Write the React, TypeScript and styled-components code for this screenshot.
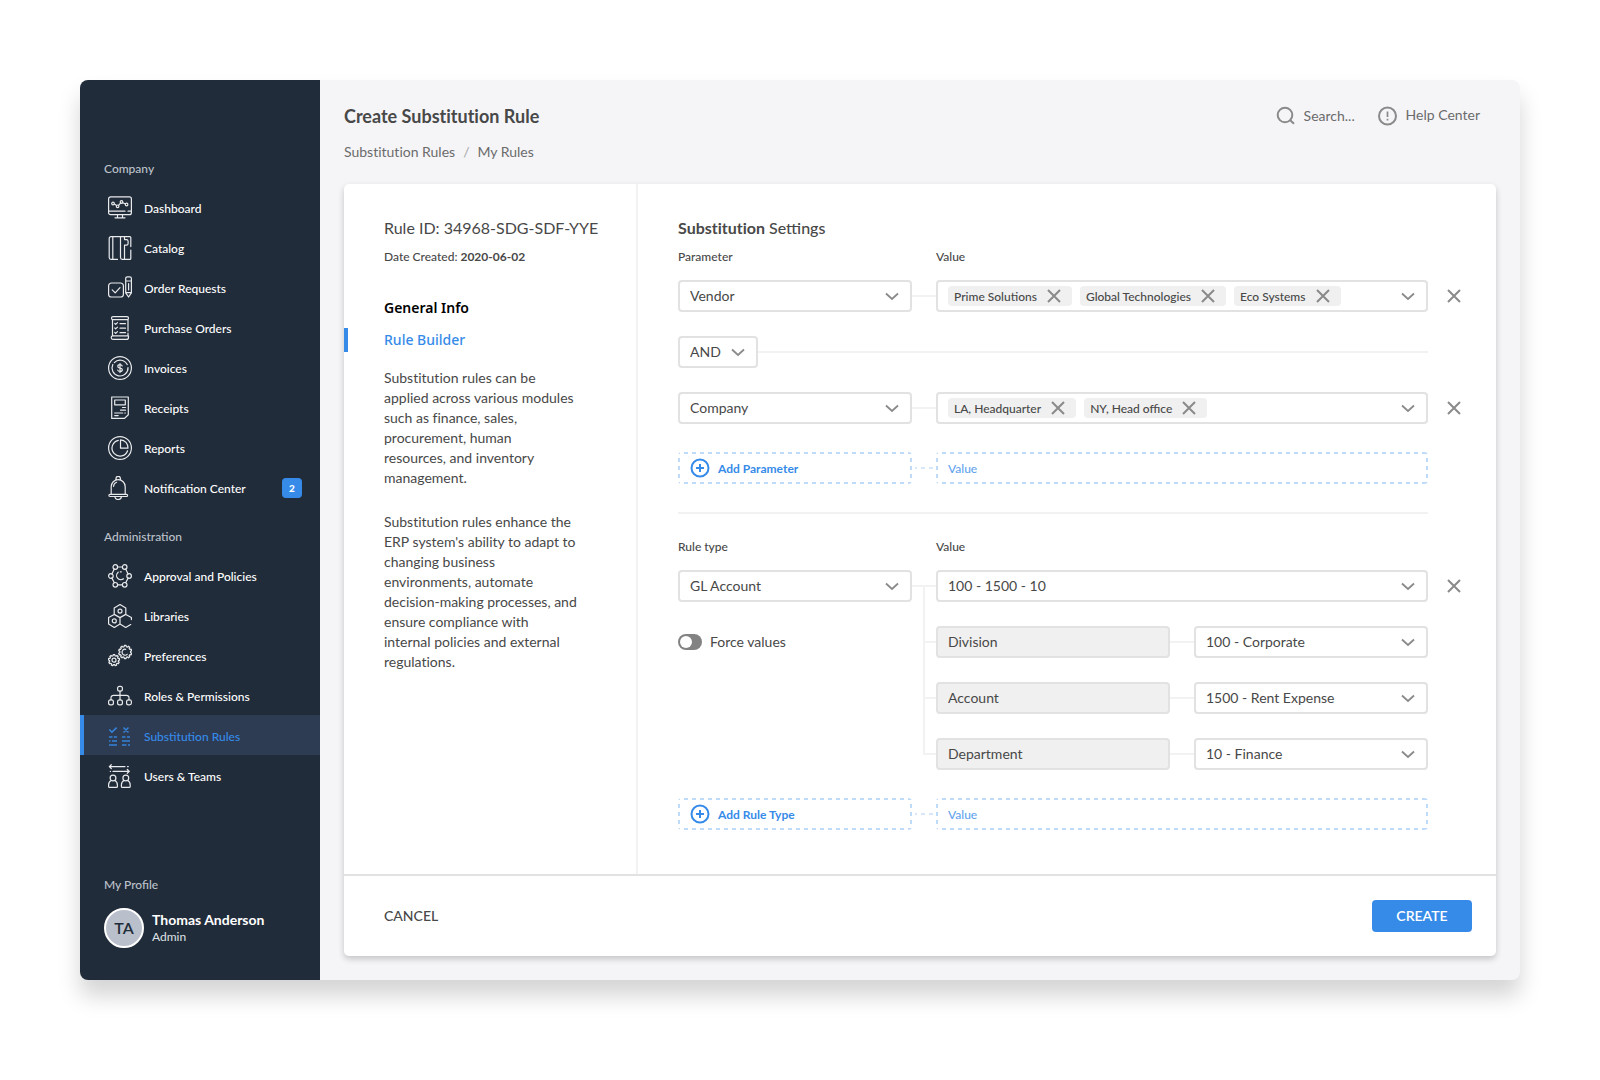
import React from 'react';
import styled, { createGlobalStyle, css } from 'styled-components';

const color = {
  navy: '#212c3a',
  navyActive: '#2d3b53',
  blue: '#368be9',
  blueSoft: '#bfdbfa',
  blueFaint: '#d7e8fc',
  text: '#484848',
  muted: '#6b6b6b',
  icon: '#8a8a8a',
  border: '#e2e2e2',
  line: '#f2f2f2',
  fill: '#f0f0f0',
  canvas: '#f5f5f8',
};

const GlobalStyle = createGlobalStyle`
  *, *::before, *::after { box-sizing: border-box; }
  body { margin: 0; background: #fff; }
  body, button, input, select {
    font-family: Lato, "Liberation Sans", sans-serif;
    color: ${color.text};
  }
  button, input, select { margin: 0; }
  h1, h2, p, ul, ol { margin: 0; padding: 0; }
  ul, ol { list-style: none; }
  a { color: inherit; text-decoration: none; }
  svg { display: block; flex: none; }
`;

/* ---------- Shell ---------- */

const Page = styled.div`
  display: flex;
  min-height: 100vh;
  padding: 80px 80px 100px;
`;

const Window = styled.div`
  flex: 1;
  display: flex;
  border-radius: 8px;
  background: ${color.canvas};
  box-shadow: 0 16px 22px rgba(0, 0, 0, 0.17);
`;

const Sidebar = styled.aside`
  flex: none;
  display: flex;
  flex-direction: column;
  width: 240px;
  padding: 81px 0 32px;
  border-radius: 8px 0 0 8px;
  background: ${color.navy};
`;

const SideHeading = styled.h2`
  padding: 0 24px;
  font-size: 12px;
  font-weight: 500;
  line-height: 16px;
  color: #bcc2ca;
`;

const NavGroup = styled.nav`
  margin-bottom: 22px;
`;

const NavList = styled.ul`
  margin-top: 10px;
`;

const NavLink = styled.a<{ $active?: boolean }>`
  display: flex;
  align-items: center;
  gap: 12px;
  height: 40px;
  padding: 2px 18px 0 28px;
  font-size: 12px;
  font-weight: 500;
  color: #fff;
  ${(p) =>
    p.$active &&
    css`
      color: ${color.blue};
      background: ${color.navyActive};
      box-shadow: inset 4px 0 0 ${color.blue};
    `}
`;

const NavIcon = styled.svg`
  width: 24px;
  height: 24px;
  fill: none;
  stroke: currentColor;
  stroke-width: 1.2;
  stroke-linecap: round;
  stroke-linejoin: round;
  opacity: 0.9;
`;

const Badge = styled.span`
  display: grid;
  place-items: center;
  width: 20px;
  height: 20px;
  margin-left: auto;
  border-radius: 4px;
  font-size: 10px;
  font-weight: 900;
  color: #fff;
  background: ${color.blue};
`;

const Profile = styled.section`
  display: grid;
  gap: 15px;
  margin-top: auto;
`;

const ProfileRow = styled.div`
  display: flex;
  align-items: center;
  gap: 8px;
  padding: 0 24px;
`;

const Avatar = styled.span`
  width: 40px;
  height: 40px;
  border: 2px solid #fff;
  border-radius: 50%;
  font-size: 16px;
  font-weight: 600;
  line-height: 35px;
  text-align: center;
  color: ${color.navy};
  background: #b9c0cb;
`;

const ProfileName = styled.p`
  font-size: 14px;
  font-weight: 700;
  line-height: 18px;
  color: #fff;
`;

const ProfileRole = styled.p`
  font-size: 12px;
  line-height: 16px;
  color: #dfe2e6;
`;

/* ---------- Main area ---------- */

const Main = styled.main`
  flex: 1;
  min-width: 0;
  display: flex;
  flex-direction: column;
  gap: 20px;
  padding: 24px;
`;

const Header = styled.header`
  display: flex;
  justify-content: space-between;
  align-items: flex-start;
  padding-right: 16px;
`;

const Title = styled.h1`
  font-size: 18px;
  font-weight: 700;
  line-height: 24px;
  font-variant-ligatures: none;
`;

const Crumbs = styled.ol`
  display: flex;
  gap: 8px;
  margin-top: 12px;
  font-size: 14px;
  line-height: 24px;
  font-variant-ligatures: none;
  color: ${color.muted};

  li + li::before {
    content: '/';
    margin-right: 8px;
    color: #a6a6a6;
  }
`;

const Tools = styled.div`
  display: flex;
  gap: 20px;
  height: 24px;
`;

const toolItem = css`
  display: flex;
  align-items: center;
  gap: 6px;
  font-size: 14px;
  line-height: 22px;
  color: ${color.muted};
`;

const SearchBox = styled.label`
  ${toolItem}
`;

const SearchInput = styled.input`
  width: 52px;
  padding: 0 0 2px;
  border: 0;
  outline: 0;
  font-size: 14px;
  background: transparent;
  &::placeholder {
    color: ${color.muted};
  }
`;

const HelpLink = styled.a`
  ${toolItem}

  span {
    padding-bottom: 2px;
  }
`;

const LineIcon = styled.svg<{ $accent?: boolean }>`
  width: 24px;
  height: 24px;
  fill: none;
  stroke: ${(p) => (p.$accent ? color.blue : color.icon)};
  stroke-width: 2;
  pointer-events: none;
`;

const Card = styled.form`
  flex: 1;
  display: flex;
  flex-direction: column;
  border-radius: 5px;
  background: #fff;
  box-shadow: 0 3px 6px rgba(0, 0, 0, 0.2);
`;

const CardBody = styled.div`
  flex: 1;
  display: flex;
`;

const Summary = styled.section`
  flex: none;
  width: 294px;
  padding: 32px 0 32px 40px;
  border-right: 2px solid ${color.line};
`;

const SectionTitle = styled.h2<{ $regular?: boolean }>`
  font-size: 16px;
  font-weight: ${(p) => (p.$regular ? 400 : 500)};
  line-height: 24px;

  b {
    font-weight: 700;
    font-variant-ligatures: none;
  }
`;

const Created = styled.p`
  margin-top: 9px;
  font-size: 12px;
  font-weight: 500;
  line-height: 16px;
`;

const Steps = styled.ul`
  display: grid;
  gap: 8px;
  margin: 31px 0 16px -40px;
`;

const StepLink = styled.a<{ $active?: boolean }>`
  display: block;
  padding-left: 40px;
  font-family: 'Noto Sans', 'Open Sans', sans-serif;
  font-size: 14px;
  font-weight: ${(p) => (p.$active ? 500 : 600)};
  line-height: 24px;
  color: ${(p) => (p.$active ? color.blue : '#000')};
  box-shadow: ${(p) => (p.$active ? `inset 4px 0 0 ${color.blue}` : 'none')};
`;

const Copy = styled.div`
  display: grid;
  gap: 24px;
  width: 193px;
  font-size: 14px;
  line-height: 20px;
  font-variant-ligatures: none;
`;

const Settings = styled.section`
  flex: 1;
  min-width: 0;
  padding: 32px 16px 32px 40px;
`;

/* Three equal columns joined by connectors, and a last track for the remove button. */
const Grid = styled.div`
  display: grid;
  grid-template-columns: minmax(0, 1fr) 24px minmax(0, 1fr) 24px minmax(0, 1fr) 52px;
  grid-auto-rows: 32px;
  row-gap: 24px;
  align-items: center;
`;

const LabelRow = styled(Grid)<{ $top: number }>`
  grid-auto-rows: 16px;
  margin: ${(p) => p.$top}px 0 15px;
  font-size: 12px;
  font-weight: 500;
  line-height: 16px;
`;

const ParamLabel = styled.span`
  grid-column: 1;
`;

const ValueLabel = styled.span`
  grid-column: 3 / 6;
`;

const Cell = styled.div<{ $col: string; $row?: string }>`
  grid-column: ${(p) => p.$col};
  grid-row: ${(p) => p.$row ?? 'auto'};
  min-width: 0;
`;

const JoinRow = styled(Cell)`
  display: flex;
  align-items: center;
`;

const JoinLine = styled.span`
  flex: 1;
  height: 2px;
  background: ${color.line};
`;

const Connector = styled.span<{ $col: number; $row?: number; $half?: boolean }>`
  grid-column: ${(p) => p.$col};
  grid-row: ${(p) => p.$row ?? 'auto'};
  justify-self: end;
  width: ${(p) => (p.$half ? '12px' : '100%')};
  height: 2px;
  background: ${color.line};
`;

const Trunk = styled.span`
  grid-column: 2;
  grid-row: 1 / 5;
  place-self: stretch center;
  width: 2px;
  margin: 16px 0 15px;
  background: ${color.line};
`;

/* Short, evenly spaced dashes, drawn as one strip for each edge. */
const dashX = `repeating-linear-gradient(90deg, ${color.blueSoft} 0 2px, transparent 2px 6px, ${color.blueSoft} 6px 8px)`;
const dashY = `repeating-linear-gradient(180deg, ${color.blueSoft} 0 2px, transparent 2px 6px, ${color.blueSoft} 6px 8px)`;

const dashedBox = css`
  height: 32px;
  border: 2px solid transparent;
  border-radius: 4px;
  background:
    ${dashX} top / 100% 2px no-repeat,
    ${dashX} bottom / 100% 2px no-repeat,
    ${dashY} left / 2px 100% no-repeat,
    ${dashY} right / 2px 100% no-repeat;
  background-origin: border-box;
  font-size: 12px;
`;

const DashedConnector = styled.span`
  height: 2px;
  margin: 0 3px;
  background: repeating-linear-gradient(
    90deg,
    ${color.blueFaint} 0 2px,
    transparent 2px 6px,
    ${color.blueFaint} 6px 8px
  );
`;

const SelectBox = styled.div<{ $compact?: boolean }>`
  display: grid;
  align-items: center;
  width: ${(p) => (p.$compact ? '80px' : 'auto')};

  > * {
    grid-area: 1 / 1;
  }
  > svg {
    justify-self: end;
    margin-right: 8px;
  }
`;

const NativeSelect = styled.select`
  appearance: none;
  width: 100%;
  height: 32px;
  padding: 0 32px 2px 10px;
  border: 2px solid ${color.border};
  border-radius: 4px;
  font-size: 14px;
  background: #fff;
`;

const ReadOnly = styled.input`
  display: block;
  width: 100%;
  height: 32px;
  padding: 0 10px 2px;
  border: 2px solid ${color.border};
  border-radius: 4px;
  font-size: 14px;
  background: ${color.fill};
`;

const TagField = styled.div`
  display: flex;
  align-items: center;
  gap: 8px;
  height: 32px;
  padding: 0 6px 0 10px;
  border: 2px solid ${color.border};
  border-radius: 4px;
  background: #fff;
`;

const Tag = styled.span`
  display: flex;
  align-items: center;
  gap: 5px;
  height: 20px;
  padding: 0 6px;
  border-radius: 4px;
  font-size: 12px;
  font-weight: 500;
  white-space: nowrap;
  background: ${color.fill};
`;

const IconButton = styled.button<{ $push?: boolean }>`
  display: grid;
  place-items: center;
  width: 24px;
  height: 24px;
  margin-left: ${(p) => (p.$push ? 'auto' : '0')};
  padding: 0;
  border: 0;
  background: transparent;
`;

const RemoveButton = styled(IconButton)`
  grid-column: 6;
  justify-self: center;
`;

const AddGrid = styled(Grid)`
  margin-top: 28px;
`;

const AddButton = styled.button`
  ${dashedBox}
  display: flex;
  align-items: center;
  gap: 6px;
  padding: 0 8px;
  font-weight: 700;
  color: ${color.blue};
`;

const AddInput = styled.input`
  ${dashedBox}
  grid-column: 3 / 6;
  min-width: 0;
  padding: 0 10px;
  font-weight: 500;
  &::placeholder {
    color: #63a4ee;
  }
`;

const Divider = styled.hr`
  height: 2px;
  margin: 28px 52px 0 0;
  border: 0;
  background: ${color.line};
`;

const SwitchLabel = styled.label`
  grid-column: 1;
  grid-row: 2;
  display: flex;
  align-items: center;
  gap: 8px;
  font-size: 14px;

  span {
    padding-bottom: 2px;
  }
`;

const Switch = styled.input`
  appearance: none;
  display: flex;
  align-items: center;
  width: 24px;
  height: 16px;
  margin: 0;
  padding: 0 2px;
  border-radius: 8px;
  background: #828282;

  &::before {
    content: '';
    width: 12px;
    height: 12px;
    border-radius: 50%;
    background: #fff;
  }
  &:checked {
    justify-content: flex-end;
    background: ${color.blue};
  }
`;

const CardFooter = styled.footer`
  display: flex;
  align-items: center;
  justify-content: space-between;
  height: 82px;
  padding: 0 24px 0 40px;
  border-top: 2px solid ${color.border};
`;

const FooterButton = styled.button<{ $primary?: boolean }>`
  width: ${(p) => (p.$primary ? '100px' : 'auto')};
  height: 32px;
  padding: 0 0 2px;
  border: 0;
  border-radius: 4px;
  font-size: 14px;
  font-weight: ${(p) => (p.$primary ? 600 : 500)};
  color: ${(p) => (p.$primary ? '#fff' : color.text)};
  background: ${(p) => (p.$primary ? color.blue : 'transparent')};
`;

/* ---------- Icons ---------- */

const Chevron = () => (
  <LineIcon viewBox="0 0 24 24" aria-hidden="true">
    <path d="M6 9.5l6 5.5 6-5.5" strokeWidth="1.8" />
  </LineIcon>
);

const Cross = () => (
  <LineIcon viewBox="0 0 24 24" aria-hidden="true">
    <path d="M6 6l12 12M18 6L6 18" />
  </LineIcon>
);

const PlusCircle = () => (
  <LineIcon viewBox="0 0 24 24" aria-hidden="true" $accent>
    <circle cx="12" cy="12" r="8.5" />
    <path d="M12 8v8M8 12h8" />
  </LineIcon>
);

function gear(cx: number, cy: number, inner: number, outer: number, teeth: number) {
  const points: string[] = [];
  for (let i = 0; i < teeth; i += 1) {
    [
      [-0.32, inner],
      [-0.2, outer],
      [0.2, outer],
      [0.32, inner],
    ].forEach(([shift, radius]) => {
      const angle = ((i + shift) * 2 * Math.PI) / teeth;
      points.push(
        `${(cx + radius * Math.sin(angle)).toFixed(2)} ${(cy - radius * Math.cos(angle)).toFixed(2)}`,
      );
    });
  }
  return `M${points.join('L')}Z`;
}

const icons = {
  dashboard: (
    <>
      <path d="M17 15.2H.6M20 15.2h3.4M2.6.9h18.8a2 2 0 0 1 2 2v13.8a2 2 0 0 1-2 2H2.6a2 2 0 0 1-2-2V2.9a2 2 0 0 1 2-2zM9.5 18.9v2.7M14.5 18.9v2.7M7 21.8h10" />
      <path d="M6.300 8.100l2.300 1.400M10.500 9.400l2.300-2.500M14.800 6.700l2.600 1.300" />
      <circle cx="5" cy="7.5" r="1.3" />
      <circle cx="9.600" cy="10.300" r="1.300" />
      <circle cx="13.500" cy="6" r="1.300" />
      <circle cx="18.600" cy="8.500" r="1.300" />
    </>
  ),
  catalog: (
    <>
      <path d="M9.500 23.400H3a1.800 1.800 0 0 1-1.800-1.800V2.400A1.800 1.800 0 0 1 3 .6h18.800a1 1 0 0 1 1 1v9M4.800.8v22.500M12.500.8v20.800c0 1 .7 1.800 1.700 1.800h7.600a1 1 0 0 0 1-1V14" />
      <path d="M16.500 23V9.200h2a1.600 1.600 0 0 0 1.600-1.600V5.200a1.600 1.600 0 0 0-1.600-1.600h-2V.8" />
    </>
  ),
  orders: (
    <>
      <path d="M3.400 7h9.200a2.800 2.800 0 0 1 2.800 2.800v8.400a2.800 2.800 0 0 1-2.800 2.800H3.400a2.800 2.800 0 0 1-2.800-2.800V9.800A2.800 2.800 0 0 1 3.400 7z" />
      <path d="M4.200 13.800l3 3 4.800-5.200" />
      <path d="M17.700 2.500c0-1 .7-1.700 1.700-1.700h2.300c1 0 1.700.7 1.700 1.700v14.300l-2.800 4.200-2.900-4.200zM17.700 5h5.700M17.700 16.700h5.700M20.600 7.500v6.500" />
    </>
  ),
  purchases: (
    <>
      <path d="M20 15V3.200M4.500 3.700v16.100M5 .7h14a1.500 1.500 0 0 1 0 3H5a1.500 1.500 0 0 1 0-3zM20 17v2.800M17.500 19.800H4.800c-1 0-1.600.8-1.600 1.800 0 1 .7 1.800 1.700 1.800h13.400c1.200 0 2.200-.9 2.200-2v-1.600z" />
      <path d="M6.800 7.500l.9.9L9.500 6.600M6.800 12l.9.9 1.800-1.800M6.800 16.500l.9.9 1.800-1.800M12 7.700h5.500M12 12.200h5.500M12 16.700h5.500" />
    </>
  ),
  invoices: (
    <>
      <circle cx="12" cy="12" r="11.4" />
      <path d="M6.300 6.600a8 8 0 0 1 12.900 2M20 11.500A8 8 0 1 1 4.800 8.500" />
      <path d="M14.200 9.900c-.4-.8-1.200-1.200-2.200-1.200-1.300 0-2.200.7-2.200 1.700s.8 1.400 2.200 1.600c1.400.2 2.300.6 2.300 1.700s-1 1.700-2.300 1.700c-1.100 0-2-.5-2.300-1.300M12 7.500v9" />
    </>
  ),
  receipts: (
    <path d="M4 1h16.300v17.700L16.500 22.400H3.700V1M6.700 4h10.600v4.800H6.700zM14.500 11.500h3M12.500 14.200h5M6.700 17h8M16.800 17h.6M6.700 19.600h3.500" />
  ),
  reports: (
    <>
      <circle cx="12" cy="12" r="11.4" />
      <path d="M10.300 4.300a8 8 0 1 0 9.300 10.400M12.500 3.800v8.400h7.500a8 8 0 0 0-7.500-8.400z" />
    </>
  ),
  bell: (
    <path d="M3.200 18.200v-7.500a7 7 0 0 1 14 0v7.500M2 18.300h16.500a1 1 0 0 1 0 2.200H2a1 1 0 0 1 0-2.200zM8 3.700V2.500a2.200 2.200 0 0 1 4.400 0v1.200M7 20.600c0 1.700 1.400 2.900 3.200 2.900s3.200-1.200 3.200-2.900M5.600 10.300a4.500 4.500 0 0 1 3-4" />
  ),
  approval: (
    <>
      <circle cx="7.300" cy="3" r="2.300" />
      <circle cx="16.700" cy="3" r="2.300" />
      <circle cx="2.900" cy="12" r="2.300" />
      <circle cx="21.100" cy="12" r="2.300" />
      <circle cx="7.300" cy="20.800" r="2.300" />
      <circle cx="16.700" cy="20.800" r="2.300" />
      <path d="M9.600 3h4.800M9.600 20.800h4.800M6.300 5.100L3.900 9.900M17.700 5.100l2.400 4.800M3.900 14.100l2.400 4.600M20.100 14.100l-2.400 4.600" />
      <path d="M15.500 14.800a4.200 4.200 0 1 1-5.300-6.600M12.300 7.800h1" />
    </>
  ),
  libraries: (
    <>
      <path d="M12 .5l5.800 3.400v6.500L12 13.600l-5.800-3.200V3.900zM6.200 10.400L.6 13.600v6.500l5.700 3.400 5.700-3.400v-6.500M12 20.100l5.700 3.400 5-2.900M17.800 10.400l5.600 3.200v2" />
      <circle cx="12" cy="7.100" r="2" />
      <circle cx="6.300" cy="16.900" r="2" />
    </>
  ),
  preferences: (
    <>
      <path d={gear(6, 16.2, 4.5, 5.6, 9)} />
      <circle cx="6" cy="16.2" r="2" />
      <path d={gear(17.2, 8, 5.4, 6.6, 10)} />
      <path d="M19.200 10.300a3 3 0 1 1-1.500-5" />
    </>
  ),
  roles: (
    <>
      <rect x="9.600" y="2.300" width="4.800" height="4.800" rx="1.900" />
      <rect x=".6" y="15.800" width="4.800" height="5" rx="1.900" />
      <rect x="9.600" y="15.800" width="4.800" height="5" rx="1.900" />
      <rect x="18.600" y="15.800" width="4.800" height="5" rx="1.900" />
      <path d="M12 7.100v8.700M3 15.800v-2a2.500 2.500 0 0 1 2.500-2.500h13a2.500 2.500 0 0 1 2.500 2.500v2" />
    </>
  ),
  rules: (
    <g strokeLinecap="butt" strokeWidth="1.500">
      <path d="M1.300 5.500l2.600 2.600 4.800-4.500M15.500 3.500l5 5M20.500 3.500l-5 5" />
      <path d="M1 13h3.500M5.800 13H9M1 17h1.500M4 17h5M1 21h8M14 13h3.500M19 13h3M14 17h8M14 21h4.500M20 21h2" />
    </g>
  ),
  users: (
    <>
      <path d="M3.300.7l-2 1.900 2 1.900M1.500 2.600H17M19.500 2.600h.8M19.300 5.500l2 1.900-2 1.900M21 7.400H5M2.500 7.400h-.2" />
      <circle cx="5" cy="14" r="2.900" />
      <circle cx="17.800" cy="14" r="2.900" />
      <path d="M3.200 16.500C1.500 17.300.6 18.800.6 21v1.400c0 .6.400 1 1 1h6.800c.6 0 1-.4 1-1V21c0-2.200-.9-3.700-2.600-4.500M16 16.500c-1.700.8-2.600 2.300-2.600 4.500v1.400c0 .6.400 1 1 1h6.800c.6 0 1-.4 1-1V21c0-2.200-.9-3.700-2.600-4.500" />
    </>
  ),
};

type IconName = keyof typeof icons;

/* ---------- Data ---------- */

interface NavEntry {
  label: string;
  icon: IconName;
  count?: number;
}

const companyNav: NavEntry[] = [
  { label: 'Dashboard', icon: 'dashboard' },
  { label: 'Catalog', icon: 'catalog' },
  { label: 'Order Requests', icon: 'orders' },
  { label: 'Purchase Orders', icon: 'purchases' },
  { label: 'Invoices', icon: 'invoices' },
  { label: 'Receipts', icon: 'receipts' },
  { label: 'Reports', icon: 'reports' },
  { label: 'Notification Center', icon: 'bell', count: 2 },
];

const adminNav: NavEntry[] = [
  { label: 'Approval and Policies', icon: 'approval' },
  { label: 'Libraries', icon: 'libraries' },
  { label: 'Preferences', icon: 'preferences' },
  { label: 'Roles & Permissions', icon: 'roles' },
  { label: 'Substitution Rules', icon: 'rules' },
  { label: 'Users & Teams', icon: 'users' },
];

const conditions = [
  { parameter: 'Vendor', values: ['Prime Solutions', 'Global Technologies', 'Eco Systems'] },
  { parameter: 'Company', values: ['LA, Headquarter', 'NY, Head office'] },
];

const segments = [
  { name: 'Division', value: '100 - Corporate' },
  { name: 'Account', value: '1500 - Rent Expense' },
  { name: 'Department', value: '10 - Finance' },
];

/* ---------- Parts ---------- */

function Nav({ heading, entries, active }: { heading: string; entries: NavEntry[]; active?: string }) {
  return (
    <NavGroup aria-label={heading}>
      <SideHeading>{heading}</SideHeading>
      <NavList>
        {entries.map((entry) => (
          <li key={entry.label}>
            <NavLink href="#" $active={entry.label === active}>
              <NavIcon viewBox="0 0 24 24" aria-hidden="true">
                {icons[entry.icon]}
              </NavIcon>
              {entry.label}
              {entry.count && <Badge>{entry.count}</Badge>}
            </NavLink>
          </li>
        ))}
      </NavList>
    </NavGroup>
  );
}

function Select({ label, value, compact }: { label: string; value: string; compact?: boolean }) {
  return (
    <SelectBox $compact={compact}>
      <NativeSelect aria-label={label} defaultValue={value}>
        <option>{value}</option>
      </NativeSelect>
      <Chevron />
    </SelectBox>
  );
}

function Condition({ parameter, values }: { parameter: string; values: string[] }) {
  return (
    <>
      <Cell $col="1">
        <Select label="Parameter" value={parameter} />
      </Cell>
      <Connector $col={2} />
      <Cell $col="3 / 6">
        <TagField>
          {values.map((value) => (
            <Tag key={value}>
              {value}
              <IconButton type="button" aria-label={`Remove ${value}`}>
                <Cross />
              </IconButton>
            </Tag>
          ))}
          <IconButton type="button" $push aria-label={`Choose ${parameter} values`}>
            <Chevron />
          </IconButton>
        </TagField>
      </Cell>
      <RemoveButton type="button" aria-label={`Remove ${parameter}`}>
        <Cross />
      </RemoveButton>
    </>
  );
}

function AddRow({ label }: { label: string }) {
  return (
    <AddGrid>
      <AddButton type="button">
        <PlusCircle />
        {label}
      </AddButton>
      <DashedConnector />
      <AddInput aria-label={`${label} value`} placeholder="Value" />
    </AddGrid>
  );
}

export default function App() {
  return (
    <>
      <GlobalStyle />
      <Page>
        <Window>
          <Sidebar>
            <Nav heading="Company" entries={companyNav} />
            <Nav heading="Administration" entries={adminNav} active="Substitution Rules" />
            <Profile>
              <SideHeading>My Profile</SideHeading>
              <ProfileRow>
                <Avatar>TA</Avatar>
                <div>
                  <ProfileName>Thomas Anderson</ProfileName>
                  <ProfileRole>Admin</ProfileRole>
                </div>
              </ProfileRow>
            </Profile>
          </Sidebar>

          <Main>
            <Header>
              <div>
                <Title>Create Substitution Rule</Title>
                <Crumbs>
                  <li>
                    <a href="#">Substitution Rules</a>
                  </li>
                  <li>
                    <a href="#">My Rules</a>
                  </li>
                </Crumbs>
              </div>
              <Tools>
                <SearchBox>
                  <LineIcon viewBox="0 0 24 24" aria-hidden="true">
                    <circle cx="11" cy="11" r="7.3" />
                    <path d="M16.200 16.200l3.800 3.600" />
                  </LineIcon>
                  <SearchInput aria-label="Search" placeholder="Search..." />
                </SearchBox>
                <HelpLink href="#">
                  <LineIcon viewBox="0 0 24 24" aria-hidden="true">
                    <circle cx="11.500" cy="12" r="8.500" />
                    <path d="M11.500 7.500v5.500M11.500 14.700v1.800" strokeWidth="1.700" />
                  </LineIcon>
                  <span>Help Center</span>
                </HelpLink>
              </Tools>
            </Header>

            <Card>
              <CardBody>
                <Summary>
                  <SectionTitle $regular>Rule ID: 34968-SDG-SDF-YYE</SectionTitle>
                  <Created>
                    Date Created: <b>2020-06-02</b>
                  </Created>
                  <Steps>
                    <li>
                      <StepLink href="#">General Info</StepLink>
                    </li>
                    <li>
                      <StepLink href="#" $active>
                        Rule Builder
                      </StepLink>
                    </li>
                  </Steps>
                  <Copy>
                    <p>
                      Substitution rules can be applied across various modules such as finance, sales,
                      procurement, human resources, and inventory management.
                    </p>
                    <p>
                      Substitution rules enhance the ERP system's ability to adapt to changing business
                      environments, automate decision-making processes, and ensure compliance with
                      internal policies and external regulations.
                    </p>
                  </Copy>
                </Summary>

                <Settings>
                  <SectionTitle>
                    <b>Substitution</b> Settings
                  </SectionTitle>
                  <LabelRow $top={9}>
                    <ParamLabel>Parameter</ParamLabel>
                    <ValueLabel>Value</ValueLabel>
                  </LabelRow>
                  <Grid>
                    <Condition {...conditions[0]} />
                    <JoinRow $col="1 / 6">
                      <Select label="Join conditions with" value="AND" compact />
                      <JoinLine />
                    </JoinRow>
                    <Condition {...conditions[1]} />
                  </Grid>
                  <AddRow label="Add Parameter" />

                  <Divider />

                  <LabelRow $top={25}>
                    <ParamLabel>Rule type</ParamLabel>
                    <ValueLabel>Value</ValueLabel>
                  </LabelRow>
                  <Grid>
                    <Trunk />
                    <Cell $col="1" $row="1">
                      <Select label="Rule type" value="GL Account" />
                    </Cell>
                    <Connector $col={2} $row={1} />
                    <Cell $col="3 / 6" $row="1">
                      <Select label="GL Account value" value="100 - 1500 - 10" />
                    </Cell>
                    <RemoveButton type="button" aria-label="Remove GL Account">
                      <Cross />
                    </RemoveButton>
                    <SwitchLabel>
                      <Switch type="checkbox" role="switch" />
                      <span>Force values</span>
                    </SwitchLabel>
                    {segments.map((segment, index) => (
                      <React.Fragment key={segment.name}>
                        <Connector $col={2} $row={index + 2} $half />
                        <Cell $col="3" $row={String(index + 2)}>
                          <ReadOnly readOnly aria-label="Segment" value={segment.name} />
                        </Cell>
                        <Connector $col={4} $row={index + 2} />
                        <Cell $col="5" $row={String(index + 2)}>
                          <Select label={segment.name} value={segment.value} />
                        </Cell>
                      </React.Fragment>
                    ))}
                  </Grid>
                  <AddRow label="Add Rule Type" />
                </Settings>
              </CardBody>

              <CardFooter>
                <FooterButton type="button">CANCEL</FooterButton>
                <FooterButton type="button" $primary>
                  CREATE
                </FooterButton>
              </CardFooter>
            </Card>
          </Main>
        </Window>
      </Page>
    </>
  );
}
